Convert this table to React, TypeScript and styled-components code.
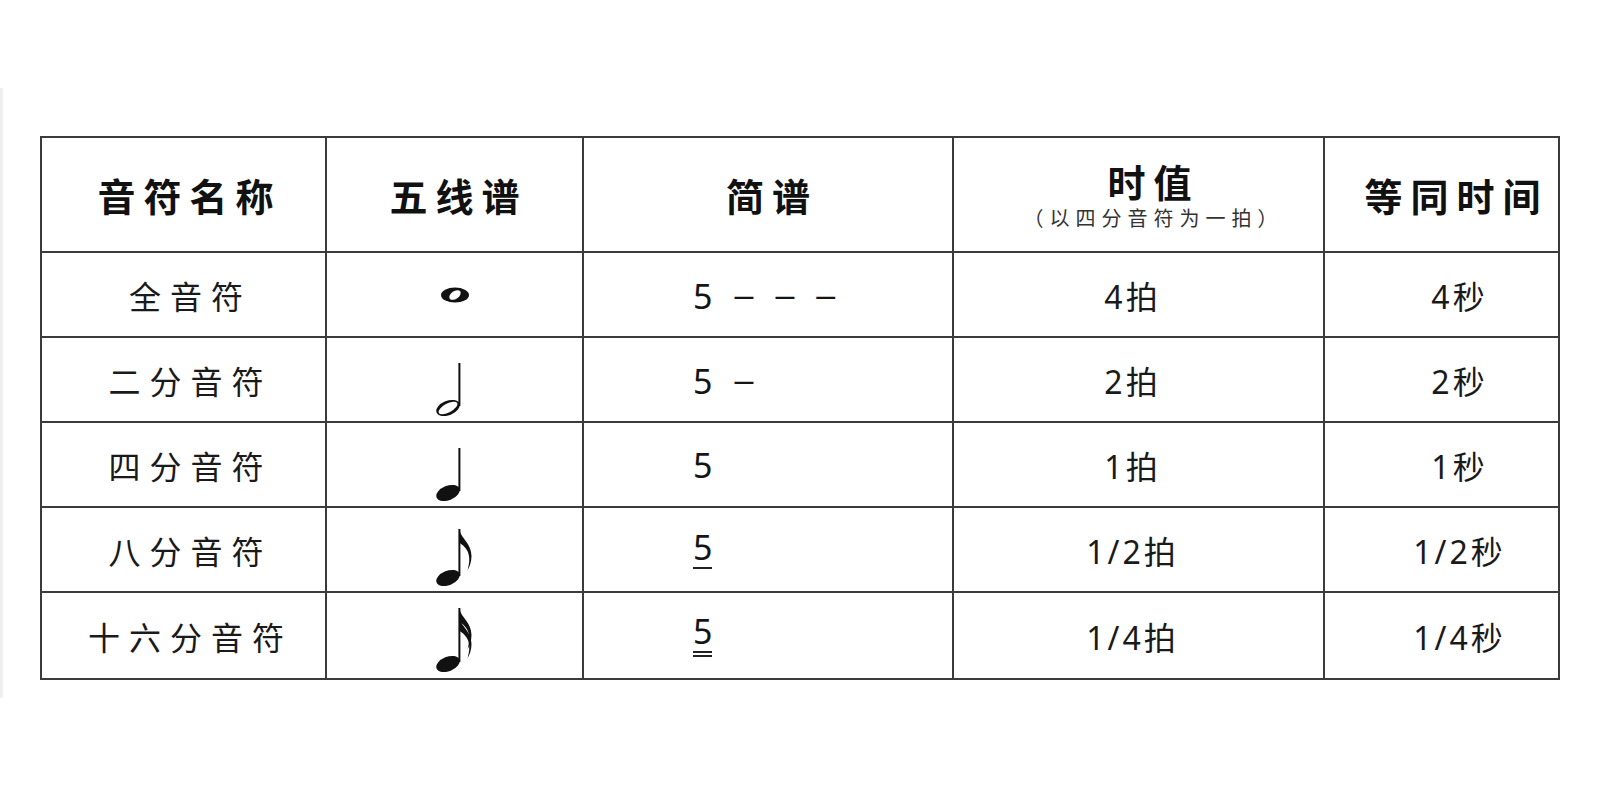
import React from 'react'
import styled, { createGlobalStyle } from 'styled-components'

const GlobalStyle = createGlobalStyle`
  html, body {
    margin: 0;
    padding: 0;
    background: #fff;
  }
  body {
    font-family: "Noto Sans", "Noto Sans CJK SC", sans-serif;
    color: #151515;
  }
`

const LINE = '#3b3b3b'

const Page = styled.div`
  width: 1600px;
  height: 800px;
  padding-top: 88px;
  box-sizing: border-box;
`

const Frame = styled.div`
  height: 610px;
  border-left: 3px solid #f0f0f0;
  padding: 48px 0 0 37px;
  box-sizing: border-box;
`

const Table = styled.table`
  border-collapse: collapse;
  table-layout: fixed;
  width: 1518px;
  border: 2px solid ${LINE};
`

const HeadCell = styled.th<{ $shift?: number }>`
  height: 113px;
  padding: 0 0 0 ${p => p.$shift ?? 0}px;
  border: 2px solid ${LINE};
  font-family: "Noto Sans CJK SC", sans-serif;
  font-weight: 700;
  font-size: 38px;
  letter-spacing: 8px;
  color: #111;
  text-align: center;
  vertical-align: middle;
`

const HeadStack = styled.div`
  display: flex;
  flex-direction: column;
  align-items: center;
  gap: 8px;
`

const HeadTitle = styled.span`
  display: block;
  line-height: 1;
`

const HeadNote = styled.span`
  display: block;
  font-size: 20px;
  line-height: 1;
  font-weight: 400;
  letter-spacing: 6px;
  color: #333;
`

const Cell = styled.td<{ $shift?: number; $tall?: boolean }>`
  height: ${p => (p.$tall ? 85 : 83)}px;
  padding: 0;
  padding-left: ${p => Math.max(p.$shift ?? 0, 0)}px;
  padding-right: ${p => Math.max(-(p.$shift ?? 0), 0)}px;
  border: 2px solid ${LINE};
  text-align: center;
  vertical-align: middle;
`

const NameCell = styled(Cell)`
  font-family: "Noto Sans CJK SC", sans-serif;
  font-size: 32px;
  letter-spacing: 9px;
  color: #1a1a1a;
`

const NoteCell = styled(Cell)`
  line-height: 0;
`

const JianpuCell = styled(Cell)`
  padding-left: 109px;
  text-align: left;
  font-size: 34px;
  line-height: 1;
`

const ValueCell = styled(Cell)`
  font-size: 32px;
  letter-spacing: 3px;
  color: #1a1a1a;
`

const Digit = styled.span<{ $lines: number }>`
  display: inline-block;
  line-height: 1;
  padding-bottom: ${p => (p.$lines ? 3 : 0)}px;
  border-bottom: ${p =>
    p.$lines === 2 ? `6px double #222` : p.$lines === 1 ? `2px solid #222` : 'none'};
`

const Dash = styled.span`
  display: inline-block;
  margin-left: 22px;
  vertical-align: 3px;
  font-family: "Liberation Sans", sans-serif;
`

type Kind = 'whole' | 'half' | 'quarter' | 'eighth' | 'sixteenth'

const Flag = ({ top }: { top: number }) => (
  <path
    d={`M24.6 ${top} C25.2 ${top + 9} 36.5 ${top + 14} 36.5 ${top + 27}
        C36.5 ${top + 33} 34.5 ${top + 38} 32.6 ${top + 41}
        C34.2 ${top + 35} 34.8 ${top + 31} 33.8 ${top + 26}
        C32.4 ${top + 19} 27.5 ${top + 16} 24.6 ${top + 14} Z`}
    fill='#111'
  />
)

const Note = ({ kind }: { kind: Kind }) => {
  if (kind === 'whole') {
    return (
      <svg width='30' height='18' viewBox='0 0 30 18'>
        <ellipse cx='15' cy='9' rx='14' ry='7.6' fill='#111' />
        <ellipse cx='15' cy='9' rx='6.4' ry='3.9' transform='rotate(-35 15 9)' fill='#fff' />
      </svg>
    )
  }
  const stem = kind === 'sixteenth' ? 58 : kind === 'eighth' ? 51 : 47
  const top = 66 - stem
  return (
    <svg width='40' height='72' viewBox='0 0 40 72'>
      <rect x='23.4' y={top} width='2' height={stem - 4} fill='#111' />
      <ellipse cx='13' cy='64' rx='12.3' ry='7.2' transform='rotate(-22 13 64)' fill='#111' />
      {kind === 'half' && (
        <ellipse cx='13' cy='64' rx='10.4' ry='4.4' transform='rotate(-28 13 64)' fill='#fff' />
      )}
      {kind === 'eighth' && <Flag top={top} />}
      {kind === 'sixteenth' && (
        <>
          <Flag top={top} />
          <Flag top={top + 9} />
        </>
      )}
    </svg>
  )
}

type Row = {
  name: string
  kind: Kind
  lines: number
  dashes: number
  beats: string
  seconds: string
}

const rows: Row[] = [
  { name: '全音符', kind: 'whole', lines: 0, dashes: 3, beats: '4拍', seconds: '4秒' },
  { name: '二分音符', kind: 'half', lines: 0, dashes: 1, beats: '2拍', seconds: '2秒' },
  { name: '四分音符', kind: 'quarter', lines: 0, dashes: 0, beats: '1拍', seconds: '1秒' },
  { name: '八分音符', kind: 'eighth', lines: 1, dashes: 0, beats: '1/2拍', seconds: '1/2秒' },
  { name: '十六分音符', kind: 'sixteenth', lines: 2, dashes: 0, beats: '1/4拍', seconds: '1/4秒' },
]

const App = () => {
  return (
    <Page>
      <GlobalStyle />
      <Frame>
        <Table>
          <colgroup>
            <col style={{ width: 285 }} />
            <col style={{ width: 257 }} />
            <col style={{ width: 370 }} />
            <col style={{ width: 371 }} />
            <col style={{ width: 235 }} />
          </colgroup>
          <thead>
            <tr>
              <HeadCell $shift={12}>音符名称</HeadCell>
              <HeadCell $shift={8}>五线谱</HeadCell>
              <HeadCell $shift={8}>简谱</HeadCell>
              <HeadCell $shift={30}>
                <HeadStack>
                  <HeadTitle>时值</HeadTitle>
                  <HeadNote>（以四分音符为一拍）</HeadNote>
                </HeadStack>
              </HeadCell>
              <HeadCell $shift={30}>等同时间</HeadCell>
            </tr>
          </thead>
          <tbody>
            {rows.map((r, i) => {
              const tall = i === rows.length - 1
              return (
                <tr key={r.name}>
                  <NameCell $shift={14} $tall={tall}>{r.name}</NameCell>
                  <NoteCell>
                    <Note kind={r.kind} />
                  </NoteCell>
                  <JianpuCell>
                    <Digit $lines={r.lines}>5</Digit>
                    {Array.from({ length: r.dashes }).map((_, j) => (
                      <Dash key={j}>–</Dash>
                    ))}
                  </JianpuCell>
                  <ValueCell $shift={-12}>{r.beats}</ValueCell>
                  <ValueCell $shift={36}>{r.seconds}</ValueCell>
                </tr>
              )
            })}
          </tbody>
        </Table>
      </Frame>
    </Page>
  )
}

export default App
